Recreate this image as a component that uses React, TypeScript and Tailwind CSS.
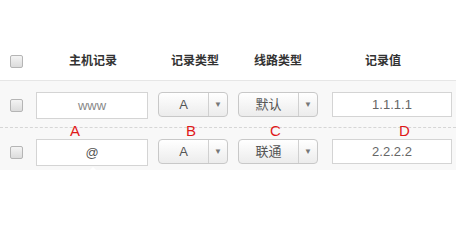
import React from 'react'

const font = { fontFamily: '"Liberation Sans", "Noto Sans CJK SC", sans-serif' }

function Checkbox() {
  return (
    <div className="h-[13px] w-[13px] rounded-[2px] border border-[#b5b5b5] bg-gradient-to-b from-[#f4f4f4] to-[#dcdcdc]" />
  )
}

function Select({ value, width }: { value: string; width: string }) {
  return (
    <div
      className={`flex h-[25px] ${width} items-stretch rounded-[4px] border border-[#c8c8c8] bg-gradient-to-b from-white to-[#ececec] text-[13px] text-[#555]`}
    >
      <div className="flex flex-1 items-center justify-center">{value}</div>
      <div className="flex w-[19px] items-center justify-center border-l border-[#d0d0d0]">
        <span className="text-[8px] leading-none text-[#777]">▼</span>
      </div>
    </div>
  )
}

function Row({
  host,
  hostColor,
  type,
  line,
  value,
  dashed,
  caret,
}: {
  host: string
  hostColor: string
  type: string
  line: string
  value: string
  dashed?: boolean
  caret?: boolean
}) {
  return (
    <div
      className={`flex items-start bg-[#f8f8f8] pt-[11px] ${
        dashed ? 'h-[47px] border-b border-dashed border-[#d6d6d6]' : 'h-[42px]'
      }`}
    >
      <div className="mt-[7px] w-[36px] pl-[10px]">
        <Checkbox />
      </div>
      <div className="relative">
        <div
          className={`flex h-[27px] w-[112px] items-center justify-center border border-[#d4d4d4] bg-white text-[13px] ${hostColor}`}
        >
          {host}
        </div>
        {caret && (
          <div className="absolute left-[52px] top-[28px] h-0 w-0 border-x-[5px] border-b-[5px] border-x-transparent border-b-white" />
        )}
      </div>
      <div className="ml-[10px]">
        <Select value={type} width="w-[70px]" />
      </div>
      <div className="ml-[10px]">
        <Select value={line} width="w-[80px]" />
      </div>
      <div className="ml-[14px] flex h-[25px] w-[120px] items-center justify-center border border-[#d4d4d4] bg-white text-[13px] text-[#666]">
        {value}
      </div>
    </div>
  )
}

export default function App() {
  return (
    <div className="relative h-[229px] w-[456px] bg-white pt-[42px]" style={font}>
      <div className="flex h-[39px] items-center border-b border-[#e6e6e6] text-[12px] font-bold text-[#333]">
        <div className="w-[36px] pl-[10px]">
          <Checkbox />
        </div>
        <div className="w-[114px] text-center">主机记录</div>
        <div className="w-[90px] text-center">记录类型</div>
        <div className="w-[76px] text-center">线路类型</div>
        <div className="w-[134px] text-center">记录值</div>
      </div>
      <Row host="www" hostColor="text-[#888]" type="A" line="默认" value="1.1.1.1" dashed />
      <Row host="@" hostColor="text-[#555]" type="A" line="联通" value="2.2.2.2" caret />

      <span className="absolute left-[70px] top-[120px] text-[15px] text-[#e01818]">A</span>
      <span className="absolute left-[186px] top-[120px] text-[15px] text-[#e01818]">B</span>
      <span className="absolute left-[270px] top-[120px] text-[15px] text-[#e01818]">C</span>
      <span className="absolute left-[399px] top-[120px] text-[15px] text-[#e01818]">D</span>
    </div>
  )
}
